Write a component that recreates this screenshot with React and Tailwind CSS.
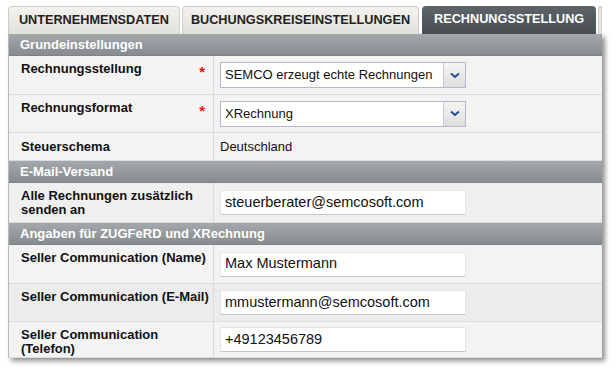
import React from 'react';

const Star = () => <span className="text-[#e8121b] text-[15px] font-bold leading-none mt-[2px]">*</span>;

const Chevron = () => (
  <svg width="10" height="7" viewBox="0 0 10 7">
    <path d="M1 1.5 L5 5 L9 1.5" fill="none" stroke="#1d4f8c" strokeWidth="2" />
  </svg>
);

const Select = ({ value }) => (
  <div className="flex h-[26px] w-[246px] border border-[#b5b8c8] bg-white">
    <div className="flex-1 flex items-center pl-[4px] text-[13px] text-[#111]">{value}</div>
    <div className="w-[22px] flex items-center justify-center border-l border-[#c9ccd6] bg-gradient-to-b from-[#f4f4f4] to-[#dedede]">
      <Chevron />
    </div>
  </div>
);

const TextInput = ({ value }) => (
  <div className="flex items-center h-[25px] w-[246px] bg-white border border-[#e4e4e4] border-b-[#c6c6c6] pl-[4px] text-[14.5px] text-[#111]">
    {value}
  </div>
);

const Section = ({ title }) => (
  <div className="h-[22px] flex items-center pl-[11px] bg-gradient-to-b from-[#a3a8ab] to-[#878c8f] text-white font-bold text-[13px] border-b border-[#7d8285]">
    {title}
  </div>
);

const Row = ({ label, star, h, bg = 'bg-[#f3f3f3]', children, top = false }) => (
  <div className={`flex ${bg} border-b border-[#dcdcdc]`} style={{ height: h }}>
    <div className={`w-[205px] flex ${top ? 'items-start pt-[6px]' : 'items-center'} justify-between pl-[12px] pr-[8px] border-r border-[#dadada]`}>
      <span className="font-bold text-[13px] leading-[14px] text-[#111] whitespace-nowrap">{label}</span>
      {star && <Star />}
    </div>
    <div className="flex-1 flex items-center pl-[6px]">{children}</div>
  </div>
);

export default function App() {
  return (
    <div className="w-[616px] h-[372px] bg-white pt-[6px] pl-[8px]" style={{ fontFamily: '"Liberation Sans", Arial, sans-serif' }}>
      <div className="w-[594px]">
        <div className="flex items-end h-[28px]">
          <div className="w-[172px] h-[28px] flex items-center justify-center rounded-t-[4px] border border-b-0 border-[#cfcdc8] bg-gradient-to-b from-[#f3f2ef] to-[#e3e1dc] text-[12.7px] font-bold text-[#222]">UNTERNEHMENSDATEN</div>
          <div className="w-[238px] ml-[2px] h-[28px] flex items-center justify-center rounded-t-[4px] border border-b-0 border-[#cfcdc8] bg-gradient-to-b from-[#f3f2ef] to-[#e3e1dc] text-[12.7px] font-bold text-[#222]">BUCHUNGSKREISEINSTELLUNGEN</div>
          <div className="w-[174px] ml-[3px] h-[28px] flex items-center justify-center rounded-t-[4px] bg-gradient-to-b from-[#5e6569] to-[#474d51] text-[12.7px] font-bold text-white">RECHNUNGSSTELLUNG</div>
          <div className="w-[4px] ml-[2px] h-[28px] rounded-tl-[3px] border border-b-0 border-[#cfcdc8] bg-[#e8e6e1]"></div>
        </div>
        <div className="border-l border-[#b9b9b9] shadow-[3px_3px_5px_rgba(0,0,0,0.45)]">
          <Section title="Grundeinstellungen" />
          <Row label="Rechnungsstellung" star h={39} top>
            <Select value="SEMCO erzeugt echte Rechnungen" />
          </Row>
          <Row label="Rechnungsformat" star h={38} top>
            <Select value="XRechnung" />
          </Row>
          <Row label="Steuerschema" h={28}>
            <span className="text-[13px] text-[#111]">Deutschland</span>
          </Row>
          <Section title="E-Mail-Versand" />
          <Row label={<>Alle Rechnungen zusätzlich<br />senden an</>} h={40} bg="bg-[#efefef]">
            <TextInput value="steuerberater@semcosoft.com" />
          </Row>
          <Section title="Angaben für ZUGFeRD und XRechnung" />
          <Row label="Seller Communication (Name)" h={39} top>
            <TextInput value="Max Mustermann" />
          </Row>
          <Row label="Seller Communication (E-Mail)" h={38} bg="bg-[#ececec]" top>
            <TextInput value="mmustermann@semcosoft.com" />
          </Row>
          <Row label={<>Seller Communication<br />(Telefon)</>} h={36} top>
            <TextInput value="+49123456789" />
          </Row>
        </div>
      </div>
    </div>
  );
}
